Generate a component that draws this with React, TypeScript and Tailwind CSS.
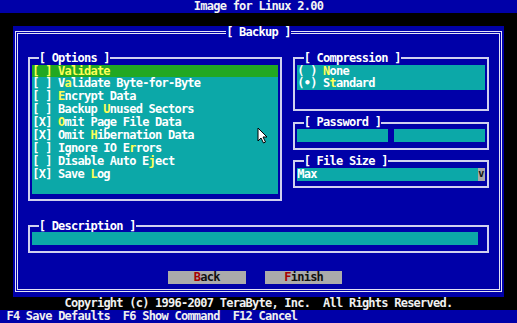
import type { ReactNode } from "react";

// 80x25 text-mode screen scaled to 517x323: one cell = 6.4625 x 12.92 px

type Item = { text: string; key: number };

const options: Item[] = [
  { text: "[_] Validate", key: 4 },
  { text: "[ ] Validate Byte-for-Byte", key: 5 },
  { text: "[ ] Encrypt Data", key: 4 },
  { text: "[ ] Backup Unused Sectors", key: 11 },
  { text: "[X] Omit Page File Data", key: 4 },
  { text: "[X] Omit Hibernation Data", key: 9 },
  { text: "[ ] Ignore IO Errors", key: 15 },
  { text: "[ ] Disable Auto Eject", key: 18 },
  { text: "[X] Save Log", key: 9 },
];

const compression: Item[] = [
  { text: "( ) None", key: 4 },
  { text: "(•) Standard", key: 5 },
];

function Hot({ item, keyClass }: { item: Item; keyClass: string }) {
  const { text, key } = item;
  return (
    <>
      {text.slice(0, key)}
      <span className={keyClass}>{text[key]}</span>
      {text.slice(key + 1)}
    </>
  );
}

function Box({ title, className, children }: { title: string; className: string; children?: ReactNode }) {
  return (
    <div className={`px-[2.23px] py-[5.46px] ${className}`}>
      <div className="h-full border-2 border-[#d0d0ee] px-[2.23px] py-[5.46px] flex flex-col">
        <div className="-mt-[12.92px] ml-[6.46px] h-[12.92px] flex">
          <span className="bg-[#0000a8] text-white">[ {title} ]</span>
        </div>
        {children}
      </div>
    </div>
  );
}

export default function App() {
  return (
    <div className="w-[517px] h-[323px] bg-black flex flex-col font-['DejaVu_Sans_Mono',monospace] font-bold text-[12px] tracking-[-0.762px] leading-[12.92px] whitespace-pre overflow-hidden">
      {/* title bar */}
      <div className="h-[12.92px] bg-[#0000a8] text-[#f4f4f4] text-center">Image for Linux 2.00</div>
      <div className="h-[12.92px]" />

      {/* dialog */}
      <div className="h-[271.32px] pl-[12.93px]">
        <div className="w-[491.15px] h-full bg-[#0000a8] px-[1.73px] py-[4.96px]">
          <div className="h-full border-[3px] border-double border-[#e4e4f6] px-[1.73px] py-[4.96px] flex flex-col">
            <div className="-mt-[12.92px] h-[12.92px] flex justify-center">
              <span className="bg-[#0000a8] text-white">[ Backup ]</span>
            </div>

            <div className="h-[12.92px]" />

            <div className="h-[155.04px] flex pl-[6.46px]">
              <Box title="Options" className="w-[258.5px] h-full relative">
                {options.map((o, i) => (
                  <div
                    key={i}
                    className={
                      i === 0
                        ? "h-[12.92px] bg-[#22a822] text-[#ffff55]"
                        : "h-[12.92px] bg-[#0ca8a8] text-white"
                    }
                  >
                    <Hot item={o} keyClass="text-[#ffff55]" />
                  </div>
                ))}
                <div className="h-[12.92px] bg-[#0ca8a8]" />
                <svg
                  className="absolute left-[231px] top-[75px]"
                  width="11"
                  height="17"
                  viewBox="0 0 11 17"
                >
                  <path
                    d="M1 1 L1 14 L4 11 L6.5 16 L8.5 15 L6 10 L10 10 Z"
                    fill="#ffffff"
                    stroke="#000000"
                    strokeWidth="1"
                    strokeLinejoin="round"
                  />
                </svg>
              </Box>

              <div className="w-[6.46px]" />

              <div className="w-[200.34px] flex flex-col">
                <Box title="Compression" className="h-[64.6px]">
                  {compression.map((c, i) => (
                    <div key={i} className="h-[12.92px] bg-[#0ca8a8] text-white">
                      <Hot item={c} keyClass="text-[#ffff55]" />
                    </div>
                  ))}
                </Box>
                <Box title="Password" className="h-[38.76px]">
                  <div className="h-[12.92px] flex">
                    <div className="w-[90.48px] bg-[#0ca8a8]" />
                    <div className="w-[6.46px]" />
                    <div className="w-[90.48px] bg-[#0ca8a8]" />
                  </div>
                </Box>
                <Box title="File Size" className="h-[38.76px]">
                  <div className="h-[12.92px] flex">
                    <div className="w-[180.95px] bg-[#0ca8a8] text-white">Max</div>
                    <div className="w-[6.46px] bg-[#a8a8a8] text-[#101010] tracking-normal text-[10px] text-center">v</div>
                  </div>
                </Box>
              </div>
            </div>

            <div className="h-[12.92px]" />

            <div className="h-[38.76px] pl-[6.46px]">
              <Box title="Description" className="w-[465.3px] h-full">
                <div className="h-[12.92px] w-[445.91px] bg-[#0ca8a8]" />
              </Box>
            </div>

            <div className="h-[12.92px]" />

            <div className="h-[12.92px] flex pl-[148.64px] gap-[19.39px]">
              <div className="w-[77.55px] bg-[#ababab] text-[#101010] text-center">
                <span className="text-[#a80000]">B</span>ack
              </div>
              <div className="w-[77.55px] bg-[#ababab] text-[#101010] text-center">
                <span className="text-[#a80000]">F</span>inish
              </div>
            </div>
          </div>
        </div>
      </div>

      {/* footer */}
      <div className="h-[12.92px] text-[#f0f0f0] text-center">
        Copyright (c) 1996-2007 TeraByte, Inc.  All Rights Reserved.
      </div>
      <div className="h-[12.92px] bg-[#0000a8] text-[#f0f0f0] pl-[6.46px]">
        F4 Save Defaults  F6 Show Command  F12 Cancel
      </div>
    </div>
  );
}
